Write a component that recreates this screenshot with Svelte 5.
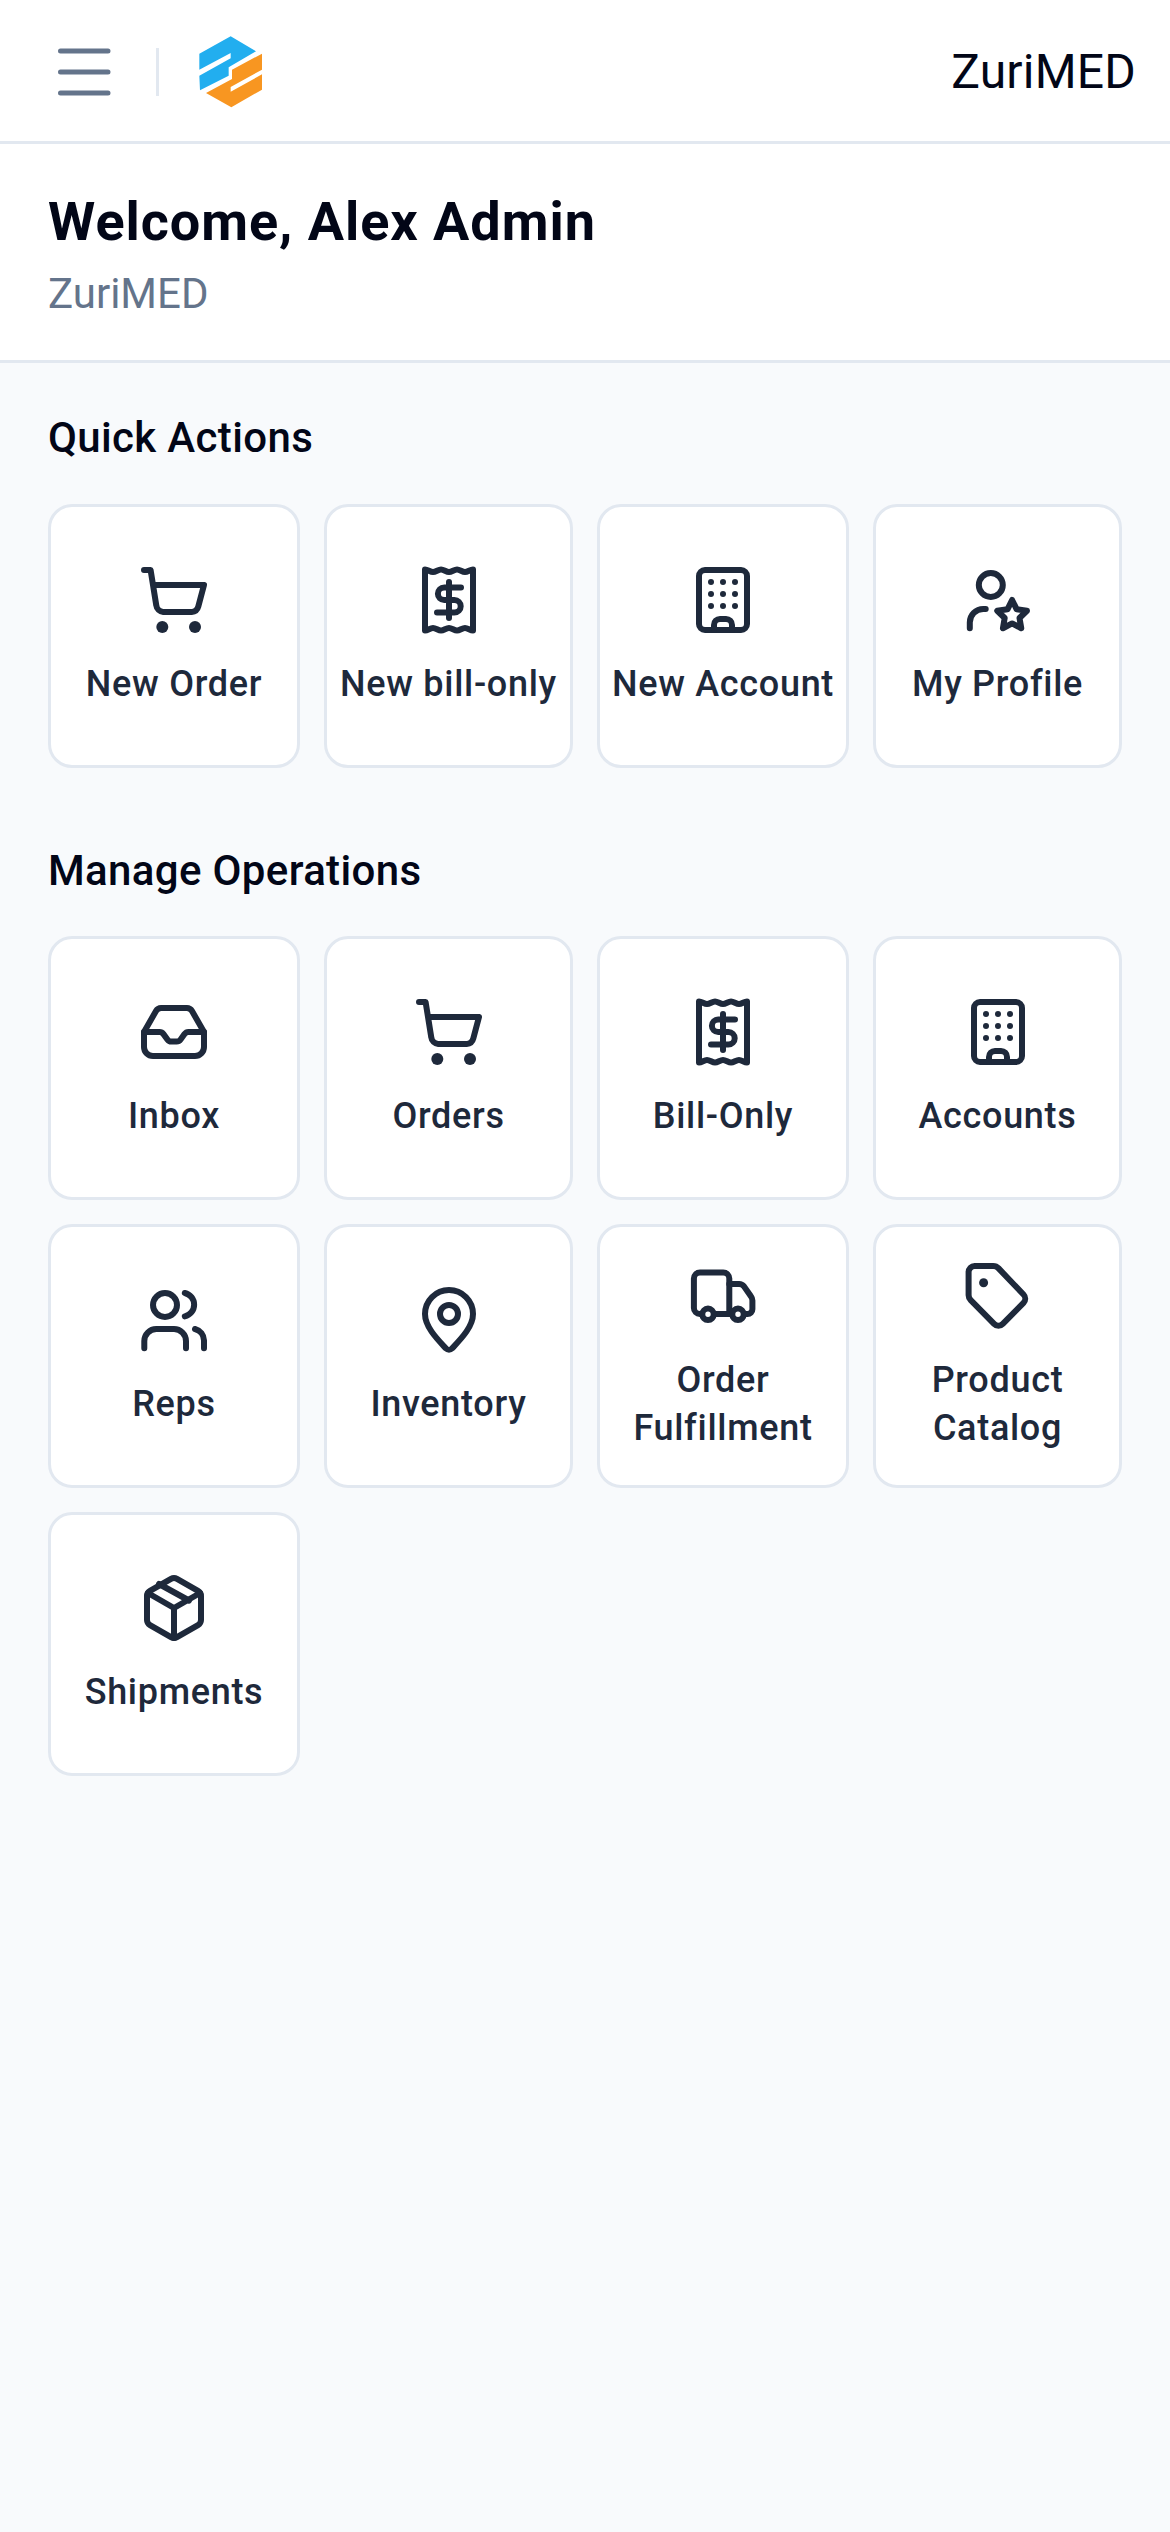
<script>
  const quick = [
    { label: 'New Order', icon: 'cart' },
    { label: 'New bill-only', icon: 'receipt' },
    { label: 'New Account', icon: 'building' },
    { label: 'My Profile', icon: 'profile' }
  ]
  const manage = [
    { label: 'Inbox', icon: 'inbox' },
    { label: 'Orders', icon: 'cart' },
    { label: 'Bill-Only', icon: 'receipt' },
    { label: 'Accounts', icon: 'building' },
    { label: 'Reps', icon: 'reps' },
    { label: 'Inventory', icon: 'pin' },
    { label: 'Order Fulfillment', icon: 'truck' },
    { label: 'Product Catalog', icon: 'tag' },
    { label: 'Shipments', icon: 'box' }
  ]
</script>

{#snippet glyph(name)}
  <svg class="icon" viewBox="0 0 24 24" fill="none" stroke="currentColor" stroke-width="2" stroke-linecap="round" stroke-linejoin="round">
    {#if name === 'cart'}
      <path d="M2 2h2.2l1.9 11.8a2.5 2.5 0 0 0 2.3 2.2h9.5a2.4 2.4 0 0 0 2.2-1.8L22 7H5"/>
      <circle cx="8.1" cy="21" r="2" fill="currentColor" stroke="none"/>
      <circle cx="19" cy="21" r="2" fill="currentColor" stroke="none"/>
    {:else if name === 'receipt'}
      <path d="M4 1.8c.9 0 1.77 .9 2.67 .9s1.77-.9 2.67-.9 1.77 .9 2.66 .9 1.77-.9 2.67-.9 1.77 .9 2.66 .9 1.77-.9 2.67-.9V22.2c-.9 0-1.77-.9-2.67-.9s-1.77 .9-2.66 .9-1.77-.9-2.67-.9-1.77 .9-2.66 .9-1.77-.9-2.67-.9-1.77 .9-2.67 .9z"/>
      <path d="M16 7.8h-5.6a2.1 2.1 0 0 0 0 4.2h3.4a2.1 2.1 0 0 1 0 4.2H8"/>
      <path d="M12 6v12"/>
    {:else if name === 'building'}
      <rect x="4" y="2" width="16" height="20" rx="2"/>
      <path d="M9 22v-1.7a2 2 0 0 1 2-2h2a2 2 0 0 1 2 2V22"/>
      <g fill="currentColor" stroke="none">
        <circle cx="8" cy="6" r="1"/><circle cx="12" cy="6" r="1"/><circle cx="16" cy="6" r="1"/>
        <circle cx="8" cy="10" r="1"/><circle cx="12" cy="10" r="1"/><circle cx="16" cy="10" r="1"/>
        <circle cx="8" cy="14" r="1"/><circle cx="12" cy="14" r="1"/><circle cx="16" cy="14" r="1"/>
      </g>
    {:else if name === 'profile'}
      <circle cx="9.6" cy="7" r="4"/>
      <path d="M2.6 21.4v-1.9a4.5 4.5 0 0 1 4.5-4.5h.8"/>
      <path d="M16.7 12L18.23 15.1L21.65 15.59L19.17 18L19.76 21.41L16.7 19.8L13.64 21.41L14.23 18L11.75 15.59L15.17 15.1z"/>
    {:else if name === 'inbox'}
      <path d="M2 12l4-7a2 2 0 0 1 1.7-1h8.6a2 2 0 0 1 1.7 1l4 7v5a3 3 0 0 1-3 3H5a3 3 0 0 1-3-3z"/>
      <path d="M2 12h5.2c.5 0 1 .3 1.3 .7l1.3 1.8c.3 .4 .8 .7 1.3 .7h1.8c.5 0 1-.3 1.3-.7l1.3-1.8c.3-.4 .8-.7 1.3-.7H22"/>
    {:else if name === 'reps'}
      <circle cx="9" cy="7" r="4"/>
      <path d="M2.1 21.4V19a4 4 0 0 1 4-4h5.9a4 4 0 0 1 4 4v2.4"/>
      <path d="M15.6 3a4 4 0 0 1 0 7.8"/>
      <path d="M19 15a4 4 0 0 1 3 3.8v2.6"/>
    {:else if name === 'pin'}
      <path d="M12 2a8 8 0 0 0-8 8c0 4.3 4.2 8.5 7 11.5a1.4 1.4 0 0 0 2 0c2.8-3 7-7.2 7-11.5a8 8 0 0 0-8-8z"/>
      <circle cx="12" cy="10" r="3"/>
    {:else if name === 'truck'}
      <path d="M5 18H4.3a2 2 0 0 1-2-2V6.2a2 2 0 0 1 2-2h7.8a2 2 0 0 1 2 2V18"/>
      <path d="M9 18h6"/>
      <path d="M14.1 8h3.3c.6 0 1.2 .3 1.6 .8l2.3 3.3c.3 .4 .5 .9 .5 1.4v2.9a1.6 1.6 0 0 1-1.6 1.6H19"/>
      <circle cx="7" cy="18.1" r="1.9"/>
      <circle cx="17" cy="18.1" r="1.9"/>
    {:else if name === 'tag'}
      <path d="M2.2 4a2 2 0 0 1 2-2h6.2a2.5 2.5 0 0 1 1.8 .8l8.3 8.7a2 2 0 0 1 0 2.8l-6.9 7a2 2 0 0 1-2.9 0L2.9 13.4a2.5 2.5 0 0 1-.7-1.7z"/>
      <circle cx="7.2" cy="7.6" r="1.5" fill="currentColor" stroke="none"/>
    {:else if name === 'box'}
      <path d="M13 2.3l7 4a2 2 0 0 1 1 1.7v8a2 2 0 0 1-1 1.7l-7 4a2 2 0 0 1-2 0l-7-4a2 2 0 0 1-1-1.7V8a2 2 0 0 1 1-1.7l7-4a2 2 0 0 1 2 0z"/>
      <path d="M3.3 7L12 12l8.7-5"/>
      <path d="M12 12v10"/>
      <path d="M7 4l10 5.5"/>
    {/if}
  </svg>
{/snippet}

{#snippet tile(item)}
  <button class="tile">
    {@render glyph(item.icon)}
    <span class="label">{item.label}</span>
  </button>
{/snippet}

<div class="screen">
  <header class="topbar">
    <button class="menu" aria-label="Menu">
      <svg width="72" height="72" viewBox="0 0 72 72" fill="none" stroke="#64748b" stroke-width="5" stroke-linecap="round">
        <path d="M12.5 15h47.5M12.5 36h47.5M12.5 57h47.5"/>
      </svg>
    </button>
    <span class="divider"></span>
    <svg class="logo" viewBox="594 106 198 222">
      <polygon fill="#22aeef" points="598,162 692,110 768,155 686,203 686,228 600,272 598,228 692,176 692,160 598,210"/>
      <polygon fill="#f89621" points="786,162 786,210 692,262 692,276 786,224 786,270 694,323 618,280 696,238 696,210"/>
    </svg>
    <span class="brand">ZuriMED</span>
  </header>

  <section class="welcome">
    <h1>Welcome, Alex Admin</h1>
    <p>ZuriMED</p>
  </section>

  <main class="content">
    <h2>Quick Actions</h2>
    <div class="grid">
      {#each quick as item}
        {@render tile(item)}
      {/each}
    </div>

    <h2 class="second">Manage Operations</h2>
    <div class="grid">
      {#each manage as item}
        {@render tile(item)}
      {/each}
    </div>
  </main>
</div>

<style>
  :global(body) {
    margin: 0;
    background: #f8fafc;
  }
  .screen {
    width: 1170px;
    min-height: 2532px;
    background: #f8fafc;
    font-family: Roboto, "Liberation Sans", sans-serif;
    display: flex;
    flex-direction: column;
  }
  .topbar {
    height: 144px;
    box-sizing: border-box;
    padding: 3px 34px 0 48px;
    background: #fff;
    border-bottom: 3px solid #e2e8f0;
    display: flex;
    align-items: center;
  }
  .menu {
    width: 72px;
    height: 72px;
    padding: 0;
    border: none;
    background: none;
    display: flex;
  }
  .divider {
    width: 3px;
    height: 48px;
    margin-left: 36px;
    background: #e2e8f0;
  }
  .logo {
    width: 66px;
    height: 74px;
    margin-left: 39px;
  }
  .brand {
    margin-left: auto;
    font-size: 48px;
    line-height: 60px;
    letter-spacing: 0.2px;
    color: #020617;
  }
  .welcome {
    background: #fff;
    border-bottom: 3px solid #e2e8f0;
    padding: 42px 48px 39px;
  }
  h1 {
    margin: 0;
    font-size: 54px;
    line-height: 72px;
    font-weight: 700;
    letter-spacing: 0.95px;
    color: #020617;
  }
  .welcome p {
    margin: 9px 0 0;
    font-size: 42px;
    line-height: 54px;
    color: #64748b;
  }
  .content {
    padding: 48px;
  }
  h2 {
    margin: 0 0 39px;
    font-size: 42px;
    line-height: 54px;
    font-weight: 500;
    letter-spacing: 0.35px;
    color: #020617;
  }
  h2.second {
    margin-top: 76px;
    margin-bottom: 38px;
  }
  .grid {
    display: grid;
    grid-template-columns: 252px 249px 252px 249px;
    grid-auto-rows: 264px;
    gap: 24px;
  }
  .tile {
    box-sizing: border-box;
    padding: 0 6px;
    background: #fff;
    border: 3px solid #e2e8f0;
    border-radius: 24px;
    color: #1e293b;
    font-family: inherit;
    display: flex;
    flex-direction: column;
    align-items: center;
    justify-content: center;
    gap: 24px;
  }
  .icon {
    width: 72px;
    height: 72px;
    flex-shrink: 0;
  }
  .label {
    font-size: 36px;
    line-height: 48px;
    font-weight: 500;
    letter-spacing: 0.7px;
    text-align: center;
  }
</style>
